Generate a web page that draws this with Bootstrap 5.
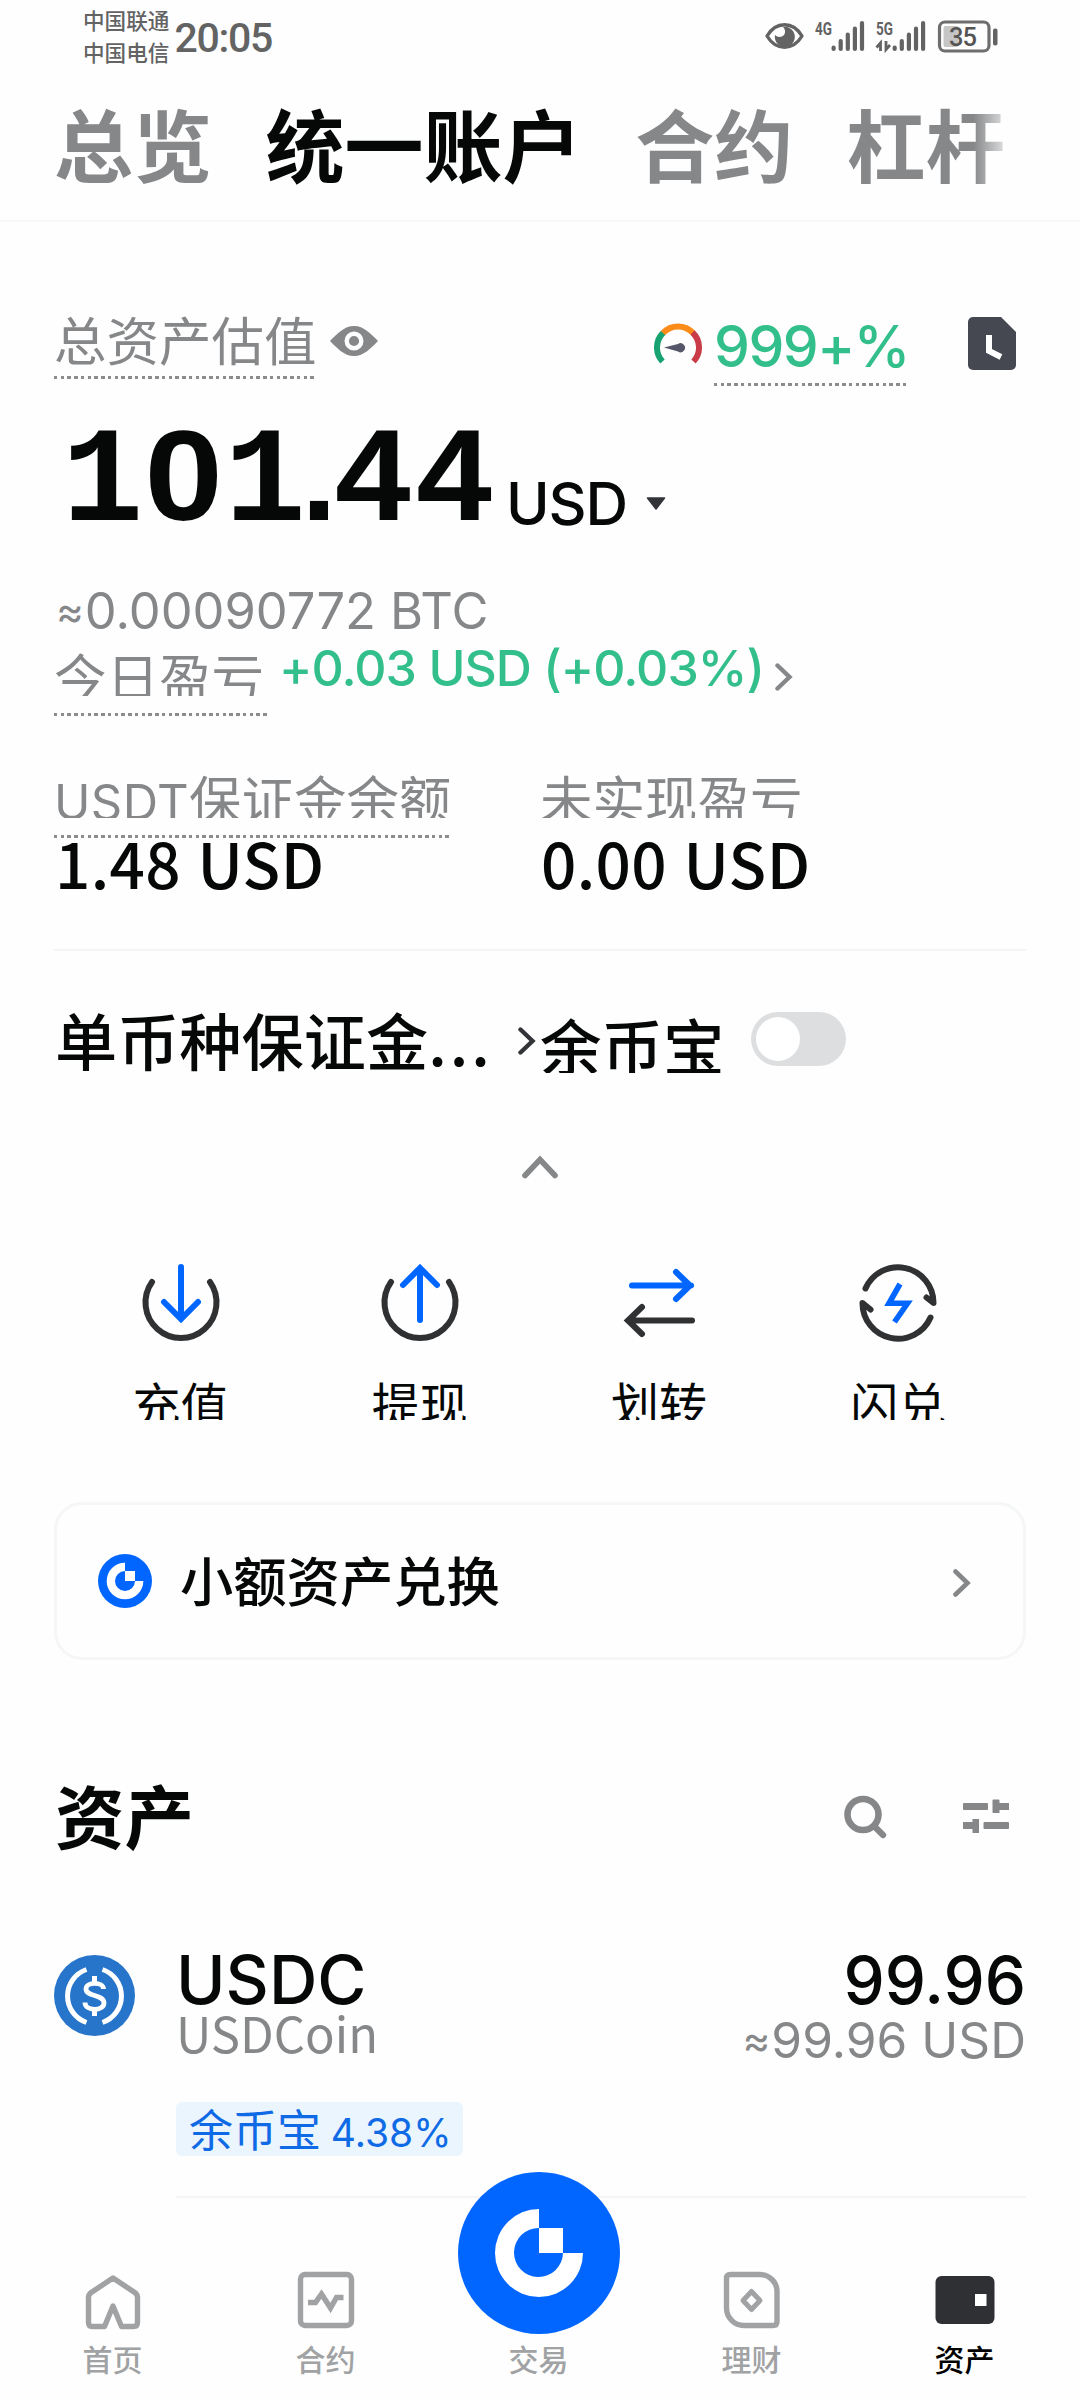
<!DOCTYPE html>
<html lang="zh-CN">
<head>
<meta charset="utf-8">
<meta name="viewport" content="width=device-width, initial-scale=1">
<title>统一账户</title>
<link href="https://cdn.jsdelivr.net/npm/bootstrap@5.3.0/dist/css/bootstrap.min.css" rel="stylesheet">
<script src="https://cdn.jsdelivr.net/npm/bootstrap@5.3.0/dist/js/bootstrap.bundle.min.js" defer></script>
<style>
:root{--ink:#060808;--mute:#858789;--green:#33bf8b;--brand:#0066ff;--hair:#f4f5f6;--cjk:"Noto Sans CJK SC",sans-serif;--num:"Inter","Noto Sans CJK SC",sans-serif}
body{background:#fefefe;color:var(--ink);font-family:var(--cjk);width:1080px;height:2400px;overflow:hidden;white-space:nowrap}
svg{display:block;flex:none}
.num{font-family:var(--num)}
.mute{color:var(--mute)}
.green{color:var(--green)}
.statusbar{height:64px;padding:9px 81px 0 83px;color:#636363}
.carrier{font-size:21.6px;line-height:32px;margin-top:-5px;font-weight:500}
.clock{font-family:"Roboto",sans-serif;font-weight:500;font-size:41px;line-height:58px;margin-left:5px;letter-spacing:-1.3px}
.tabs{height:158px;padding:0 54px;gap:53.6px;font-size:79px;font-weight:700;line-height:158px;color:var(--mute);border-bottom:2px solid #f7f8f8;overflow:hidden}
.tabs .on{color:var(--ink)}
.fade-tail{background:linear-gradient(90deg,var(--mute) 0,var(--mute) 80%,#d4d5d6 98%);-webkit-background-clip:text;background-clip:text;color:transparent}
.page-body{padding:0 54px}
.dots{background:repeating-linear-gradient(90deg,#8b8c8e 0,#8b8c8e 3.4px,transparent 3.4px,transparent 6.75px) left bottom/100% 3px no-repeat}
.r-total{height:164px;padding-top:82px}
.lbl{font-size:52.5px}
.t-total{height:75px;line-height:68px;width:260px}
.t-ratio{height:82px;line-height:85px;font-size:57px;font-weight:500;letter-spacing:-1.5px;width:193px;margin-left:12px}
.r-balance{height:190px}
.big{font-family:"Liberation Mono",monospace;font-weight:700;font-size:135.5px;line-height:197px;height:190px;margin-left:8px;width:429px}
.big span{font-family:"Liberation Sans",sans-serif;font-size:128px;line-height:1}
.big .d0{display:inline-block;margin:0 5px;transform:scaleX(1.1)}
.big .dp{margin:0 -4.5px 0 -4.5px}
.unit{font-size:59px;line-height:60px;margin:88px 0 0 15px;letter-spacing:-1.2px;font-weight:500}
.r-btc{height:70px;line-height:70px;font-size:50.6px;padding-left:2px}
.approx{font-size:42px;margin-right:1px;position:relative;top:-3px}
.r-pnl{height:70px}
.cut{overflow:hidden;height:50px;line-height:59px}
.t-pnl{height:70px;width:213px}
.t-gain{font-size:50px;line-height:45px;font-weight:500;margin-left:12px;letter-spacing:-.95px}
.r-margin{height:235px;padding-top:52px;border-bottom:2px solid var(--hair)}
.t-usdt{height:70px;width:395px}
.usdt{font-size:49px;letter-spacing:.4px}
.val{font-size:62px;font-weight:500;line-height:49px;letter-spacing:.4px;word-spacing:2px;padding-left:1px}
.r-mode{height:180px}
.mode{font-size:62.2px;font-weight:500;line-height:176px;margin-left:1px;width:460px}
.ell{letter-spacing:3px}
.yb{font-size:61.5px;font-weight:500;height:122px;line-height:187px;overflow:hidden;margin-left:4px}
.toggle{width:95px;height:54px;border-radius:27px;background:#dcdee0;padding:5px;margin:61px 0 0 26px}
.toggle i{display:block;width:44px;height:44px;border-radius:50%;background:#fff}
.r-actions{margin:84px 8px 0 7px;height:158px}
.act{font-size:48px;height:48px;line-height:60px;overflow:hidden;margin-top:29px}
.convert{height:158px;margin-top:81px;border:3px solid #f5f6f6;border-radius:28px;background:#fefefe;padding:0 52px 0 41px;font-size:53.3px;font-weight:500}
.convert span{margin:0 0 5px 28px;line-height:140px}
.r-assets{height:294px;padding:0 17px 0 1px;font-size:69.5px;font-weight:700}
.r-assets span{line-height:308px}
.coin-row{height:243px}
.coin-body{margin-left:41px;border-bottom:2px solid var(--hair);height:244px}
.sym{font-size:67px;font-weight:500;line-height:51px;height:51px;overflow:hidden}
.amt{font-size:65.5px;line-height:54px}
.coin-name{font-size:49px;line-height:51px;margin-top:1px;height:96px}
.coin-val{font-size:49.7px;line-height:60px;margin-top:5px}
.tagx{width:287px;height:54px;border-radius:6px;background:#ebf5fe;color:#0f6ae6;font-size:44px;line-height:52px;padding-left:13px}
.tagx .num{font-size:39px}
.bottomnav{height:200px;padding:71px 9px 0 6px;color:#a0a2a4;font-size:30px;font-weight:500;background:#fefefe}
.bottomnav a{width:213px;color:inherit;text-decoration:none}
.bottomnav a.on{color:#000}
.bottomnav span{line-height:42px;margin-top:5px}
.navgap{height:64px}
.fab{left:458px;top:2172px}
</style>
</head>
<body>
<header>
 <div class="statusbar d-flex align-items-start">
  <div class="carrier"><div>中国联通</div><div>中国电信</div></div>
  <div class="clock">20:05</div>
  <svg class="ms-auto mt-1" width="236" height="44" viewBox="764 13 236 44">
   <path d="M768 36C777 21 794 21 803 36C794 51 777 51 768 36Z" fill="none" stroke="#636363" stroke-width="3.4" stroke-linejoin="round"/>
   <path d="M784 27a10 10 0 1 1-8 8a6 6 0 0 0 9 0a6 6 0 0 0-1-8Z" fill="#636363"/>
   <g font-family="Roboto,sans-serif" font-weight="700" font-size="18" fill="#636363"><text x="816" y="34.500" textLength="17" lengthAdjust="spacingAndGlyphs">4G</text><text x="877" y="34.500" textLength="17" lengthAdjust="spacingAndGlyphs">5G</text></g>
   <g stroke="#636363" stroke-width="4.200" stroke-linecap="round"><path d="M834.600 47.500v1.500M841.700 41v8M848.800 34.500v14.500M855.900 28.500v20.500M863 23v26M895.700 47.500v1.500M902.800 41v8M909.900 34.500v14.500M917 28.500v20.500M924.100 23v26"/></g>
   <path d="M881.500 51V43l-4 4.500M887 41v8.500l4-4.500" fill="none" stroke="#636363" stroke-width="2.800"/>
   <rect x="940.500" y="22" width="49.500" height="29" rx="5.500" fill="none" stroke="#6e6e6e" stroke-width="3.200"/>
   <rect x="944.500" y="26" width="15" height="21" rx="2" fill="#c6c6c6"/>
   <rect x="994" y="28.500" width="4.500" height="17" rx="2" fill="#636363"/>
   <text x="950" y="46" font-family="Roboto,sans-serif" font-weight="500" font-size="25.500" textLength="28" fill="#555">35</text>
  </svg>
 </div>
 <nav class="tabs d-flex">
  <span>总览</span><span class="on">统一账户</span><span>合约</span><span class="fade-tail">杠杆</span>
 </nav>
</header>

<main class="page-body">
 <section class="r-total d-flex align-items-start">
  <div class="lbl mute t-total dots">总资产估值</div>
  <svg width="48" height="32" viewBox="0 0 48 32" style="margin:21px 0 0 16px"><path d="M0 16C7 9 14 1 24 1S41 9 48 16C41 23 34 31 24 31S7 23 0 16Z" fill="#858789"/><circle cx="24" cy="16" r="7.300" fill="none" stroke="#fefefe" stroke-width="4.400"/></svg>
  <svg class="ms-auto" width="48" height="42" viewBox="0 0 48 42" style="margin-top:19px"><g fill="none" stroke-width="6"><path d="M8.500 38.500A20.500 20.500 0 0 1 9.500 9.500" stroke="#16a271"/><path d="M9 10A20.500 20.500 0 0 1 39 10" stroke="#fb8c1a"/><path d="M38.500 9.500A20.500 20.500 0 0 1 39.500 38.500" stroke="#c93c47"/></g><path d="M10 24.500L24 21A4.500 4.500 0 1 1 24 28.500Z" fill="#555669"/></svg>
  <div class="num green t-ratio dots">999+%</div>
  <svg width="48" height="54" viewBox="0 0 48 54" style="margin:13px 10px 0 61px"><path d="M5 0H33L48 15V48a5 5 0 0 1-5 5H5a5 5 0 0 1-5-5V5a5 5 0 0 1 5-5Z" fill="#454851"/><path d="M21 18V34L33 40" fill="none" stroke="#fff" stroke-width="6"/></svg>
 </section>

 <section class="r-balance d-flex align-items-start">
  <div class="big">1<span class="d0">0</span>1<span class="dp">.</span>44</div>
  <div class="num unit">USD</div>
  <svg width="20" height="14" viewBox="0 0 20 14" style="margin:111px 0 0 19px"><path d="M1.500 1H18.500L10 12Z" fill="#333438" stroke="#333438" stroke-width="1.500" stroke-linejoin="round"/></svg>
 </section>

 <section class="r-btc num mute"><span class="approx">≈</span>0.00090772 BTC</section>

 <section class="r-pnl d-flex align-items-start">
  <div class="t-pnl dots"><div class="lbl mute cut">今日盈亏</div></div>
  <div class="num green t-gain">+0.03 USD (+0.03%)</div>
  <svg width="18" height="28" viewBox="0 0 18 28" style="margin:17px 0 0 11px"><path d="M2.500 2.500L14.500 14L2.500 25.500" fill="none" stroke="#858789" stroke-width="4.400" stroke-linecap="round"/></svg>
 </section>

 <section class="r-margin">
  <div class="row g-0">
   <div class="col-6"><div class="t-usdt dots"><div class="lbl mute cut"><span class="num usdt">USDT</span>保证金余额</div></div><div class="val">1.48 USD</div></div>
   <div class="col-6"><div class="t-usdt"><div class="lbl mute cut">未实现盈亏</div></div><div class="val">0.00 USD</div></div>
  </div>
 </section>

 <section class="r-mode d-flex align-items-start">
  <div class="mode">单币种保证金<span class="ell">...</span></div>
  <svg width="18" height="28" viewBox="0 0 18 28" style="margin:76px 0 0 3px"><path d="M2.500 2.500L14.500 14L2.500 25.500" fill="none" stroke="#333438" stroke-width="4.400" stroke-linecap="round"/></svg>
  <div class="yb">余币宝</div>
  <div class="toggle"><i></i></div>
 </section>

 <svg class="mx-auto mt-4" width="36" height="24" viewBox="0 0 36 24"><path d="M3 20.500L18 4.500L33 20.500" fill="none" stroke="#858789" stroke-width="5.600" stroke-linecap="round"/></svg>

 <section class="r-actions d-flex">
  <div class="flex-fill w-25 d-flex flex-column align-items-center">
   <svg width="80" height="80" viewBox="0 0 80 80" fill="none" stroke-linecap="round" stroke-width="6"><path d="M11 19A35.500 35.500 0 1 0 69 19" stroke="#2f3133"/><path d="M40 4V56M23 39L40 56L57 39" stroke="#0066ff"/></svg><div class="act">充值</div></div>
  <div class="flex-fill w-25 d-flex flex-column align-items-center">
   <svg width="80" height="80" viewBox="0 0 80 80" fill="none" stroke-linecap="round" stroke-width="6"><path d="M11 19A35.500 35.500 0 1 0 69 19" stroke="#2f3133"/><path d="M40 57V5M23 22L40 5L57 22" stroke="#0066ff"/></svg><div class="act">提现</div></div>
  <div class="flex-fill w-25 d-flex flex-column align-items-center">
   <svg width="80" height="80" viewBox="0 0 80 80" fill="none" stroke-linecap="round" stroke-width="6"><path d="M13 22.500H72M57 9L71 22.500L57 36" stroke="#0066ff"/><path d="M73 57.500H10M23 44L9 57.500L23 71" stroke="#2f3133"/></svg><div class="act">划转</div></div>
  <div class="flex-fill w-25 d-flex flex-column align-items-center">
   <svg width="80" height="80" viewBox="0 0 80 80" fill="none" stroke-width="6"><path d="M7.500 25.500A35.500 35.500 0 0 1 75.500 40L68.500 34.500M72.500 54.500A35.500 35.500 0 0 1 4.500 40L12.500 46.500" stroke="#2f3133" stroke-linecap="round" stroke-linejoin="round"/><path d="M42 21L31 40.300H49.500L36.500 59" stroke="#0066ff" stroke-width="5.600"/></svg><div class="act">闪兑</div></div>
 </section>

 <section class="convert d-flex align-items-center">
  <svg width="54" height="54" viewBox="0 0 162 162"><circle cx="81" cy="81" r="81" fill="#0066ff"/><path d="M81 26A55 55 0 1 0 136 81H111A30 30 0 1 1 81 51Z" fill="#fff"/><path d="M81 51h30v30h-30Z" fill="#fff"/></svg>
  <span>小额资产兑换</span>
  <svg class="ms-auto mt-1" width="18" height="28" viewBox="0 0 18 28"><path d="M2.500 2.500L14.500 14L2.500 25.500" fill="none" stroke="#858789" stroke-width="4.600" stroke-linecap="round"/></svg>
 </section>

 <section class="r-assets d-flex align-items-start">
  <span>资产</span>
  <svg class="ms-auto" width="44" height="44" viewBox="0 0 44 44" style="margin-top:135px"><circle cx="19" cy="19.500" r="15.500" fill="none" stroke="#858789" stroke-width="6.600"/><path d="M31 32L39 40" stroke="#858789" stroke-width="6.400" stroke-linecap="round"/></svg>
  <svg width="46" height="34" viewBox="0 0 46 34" style="margin:139px 0 0 75px" fill="#858789"><rect y="4" width="25" height="7" rx="1"/><path d="M30 .500h5.500q1 0 1 1V4H46v7h-9.500v3H30q-.5 0-.5-1V1.500q0-1 .5-1ZM0 23h9.500v-3H16v14H9.500v-4H0Z"/><rect x="20.500" y="23" width="25.500" height="7" rx="1"/></svg>
 </section>

 <section class="coin-row d-flex align-items-start">
  <svg width="81" height="81" viewBox="0 0 81 81" style="margin-top:1px"><circle cx="40.500" cy="40.500" r="40.500" fill="#2775ca"/><g fill="none" stroke="#fff" stroke-width="5"><path d="M32.500 14.500A28 28 0 0 0 32.500 67.500M48.500 14.500A28 28 0 0 1 48.500 67.500"/><path d="M49.500 34C49.500 26.500 32 26.500 32 34C32 42 50 39 50 48C50 56.500 31 56.500 31 47.500" stroke-width="4.800"/><path d="M40.500 21V29M40.500 53V61"/></g></svg>
  <div class="coin-body flex-fill d-flex justify-content-between align-items-start">
   <div>
    <div class="num sym">USDC</div>
    <div class="mute coin-name">USDCoin</div>
    <div class="tagx">余币宝 <span class="num">4.38%</span></div>
   </div>
   <div class="text-end">
    <div class="num sym amt">99.96</div>
    <div class="num mute coin-val"><span class="approx">≈</span>99.96 USD</div>
   </div>
  </div>
 </section>
</main>

<nav class="bottomnav d-flex">
 <a class="d-flex flex-column align-items-center"><svg width="60" height="64" viewBox="0 0 60 64"><path d="M30 10L52.500 25Q54.500 27 54.500 29V54.500Q54.500 58.500 50.500 58.500H38.500L30 38L21.500 58.500H9.500Q5.500 58.500 5.500 54.500V29Q5.500 27 7.500 25Z" fill="none" stroke="#a0a2a4" stroke-width="5.400" stroke-linejoin="round"/></svg><span>首页</span></a>
 <a class="d-flex flex-column align-items-center"><svg width="60" height="64" viewBox="0 0 60 64" fill="none" stroke="#a0a2a4"><rect x="4.500" y="6.500" width="51" height="51" rx="4.500" stroke-width="5.400"/><path d="M12 34.500H19.500L25.500 26L34.500 40L40.500 29.500H47.500" stroke-width="5.400"/></svg><span>合约</span></a>
 <a class="d-flex flex-column align-items-center"><div class="navgap"></div><span>交易</span></a>
 <a class="d-flex flex-column align-items-center"><svg width="60" height="64" viewBox="0 0 60 64" fill="none" stroke="#a0a2a4" stroke-width="5.400"><path d="M8.500 6.500H38A17 17 0 0 1 55 23.500V53.500Q55 57.500 51 57.500H22A17.500 17.500 0 0 1 4.500 40V10.500Q4.500 6.500 8.500 6.500Z"/><path d="M29.500 23.500L38 32.500L29.500 41.500L21 32.500Z" stroke-width="5" stroke-linejoin="round"/></svg><span>理财</span></a>
 <a class="d-flex flex-column align-items-center on"><svg width="60" height="64" viewBox="0 0 60 64"><rect x=".5" y="8" width="59" height="48" rx="6" fill="#2e3034"/><rect x="40" y="26" width="11.500" height="12" fill="#fff"/></svg><span>资产</span></a>
</nav>
<svg class="fab position-absolute" width="162" height="162" viewBox="0 0 162 162"><circle cx="81" cy="81" r="81" fill="#0066ff"/><path d="M81 37A44 44 0 1 0 125 81H105A24.500 24.500 0 1 1 81 56Z" fill="#fff"/><path d="M81 56h24v25h-24Z" fill="#fff"/></svg>
</body>
</html>
